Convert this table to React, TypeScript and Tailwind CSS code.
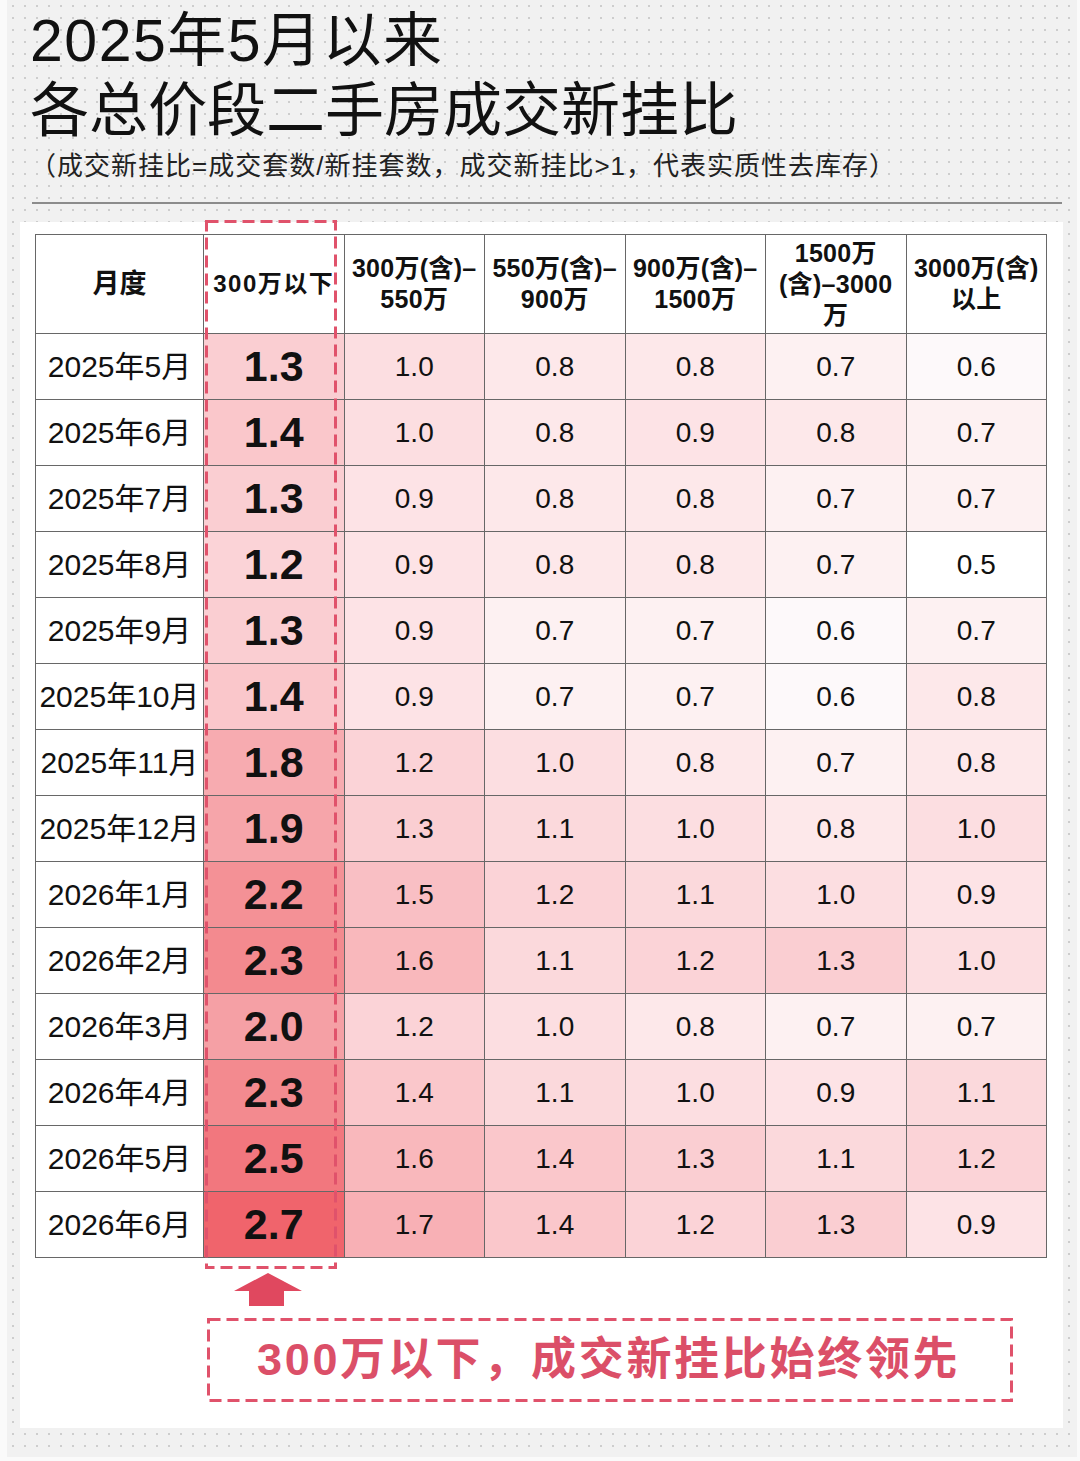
import React from "react";

type Row = [string, number, number, number, number, number, number];

const rows: Row[] = [
  ["2025年5月", 1.3, 1.0, 0.8, 0.8, 0.7, 0.6],
  ["2025年6月", 1.4, 1.0, 0.8, 0.9, 0.8, 0.7],
  ["2025年7月", 1.3, 0.9, 0.8, 0.8, 0.7, 0.7],
  ["2025年8月", 1.2, 0.9, 0.8, 0.8, 0.7, 0.5],
  ["2025年9月", 1.3, 0.9, 0.7, 0.7, 0.6, 0.7],
  ["2025年10月", 1.4, 0.9, 0.7, 0.7, 0.6, 0.8],
  ["2025年11月", 1.8, 1.2, 1.0, 0.8, 0.7, 0.8],
  ["2025年12月", 1.9, 1.3, 1.1, 1.0, 0.8, 1.0],
  ["2026年1月", 2.2, 1.5, 1.2, 1.1, 1.0, 0.9],
  ["2026年2月", 2.3, 1.6, 1.1, 1.2, 1.3, 1.0],
  ["2026年3月", 2.0, 1.2, 1.0, 0.8, 0.7, 0.7],
  ["2026年4月", 2.3, 1.4, 1.1, 1.0, 0.9, 1.1],
  ["2026年5月", 2.5, 1.6, 1.4, 1.3, 1.1, 1.2],
  ["2026年6月", 2.7, 1.7, 1.4, 1.2, 1.3, 0.9],
];

// heatmap stops: value -> rgb
const stops: [number, [number, number, number]][] = [
  [0.5, [255, 255, 255]],
  [0.6, [253, 249, 250]],
  [0.8, [253, 232, 234]],
  [1.0, [252, 222, 225]],
  [1.3, [250, 206, 210]],
  [1.7, [248, 176, 181]],
  [2.0, [245, 160, 165]],
  [2.3, [243, 138, 143]],
  [2.7, [240, 100, 108]],
];

function heat(v: number) {
  if (v <= stops[0][0]) return "rgb(255,255,255)";
  for (let i = 1; i < stops.length; i++) {
    const [v1, c1] = stops[i];
    const [v0, c0] = stops[i - 1];
    if (v <= v1) {
      const t = (v - v0) / (v1 - v0);
      const c = c0.map((x, k) => Math.round(x + (c1[k] - x) * t));
      return `rgb(${c[0]},${c[1]},${c[2]})`;
    }
  }
  const last = stops[stops.length - 1][1];
  return `rgb(${last[0]},${last[1]},${last[2]})`;
}

const headers: React.ReactNode[] = [
  <>300万(含)–<br />550万</>,
  <>550万(含)–<br />900万</>,
  <>900万(含)–<br />1500万</>,
  <>1500万<br />(含)–3000<br />万</>,
  <>3000万(含)<br />以上</>,
];

const cellBorder = "border border-[#676767]";

// dashed outline drawn as svg so dash length matches
function DashedFrame({ w, h }: { w: number; h: number }) {
  return (
    <svg
      className="absolute left-0 top-0 pointer-events-none"
      width={w}
      height={h}
      viewBox={`0 0 ${w} ${h}`}
    >
      <rect
        x="1.5"
        y="1.5"
        width={w - 3}
        height={h - 3}
        fill="none"
        stroke="#e0526b"
        strokeWidth="3"
        strokeDasharray="12 6"
      />
    </svg>
  );
}

export default function App() {
  return (
    <div className="w-[1080px] h-[1461px] bg-[#fafafa] pl-[7px] pr-[3px] pb-[4px] font-['Liberation_Sans','Noto_Sans_CJK_SC',sans-serif] text-[#111]">
      <div className="h-full bg-[#f1f1f1] bg-[radial-gradient(circle,#cdcdcd_0.9px,transparent_1.4px)] bg-[length:12px_12px] pt-[6px] pb-[29px]">
        {/* title */}
        <div className="pl-[23px]">
          <h1 className="text-[59px] leading-[70px] font-normal">
            <span className="tracking-[1.5px]">2025年5月以来</span>
            <br />
            各总价段二手房成交新挂比
          </h1>
          <p className="mt-[5px] text-[26px] leading-[30px] text-[#222] tracking-[1px]">
            （成交新挂比=成交套数/新挂套数，成交新挂比&gt;1，代表实质性去库存）
          </p>
        </div>
        <div className="ml-[25px] mt-[21px] w-[1030px] h-[2px] bg-[#8c8c8c]" />

        {/* card */}
        <div className="ml-[13px] mt-[18px] w-[1043px] h-[1206px] bg-white pl-[15px] pt-[12px]">
          <div className="relative w-[1012px]">
            <table className="table-fixed border-collapse w-[1012px]">
              <colgroup>
                <col className="w-[168px]" />
                <col />
                <col />
                <col />
                <col />
                <col />
                <col />
              </colgroup>
              <thead>
                <tr className="h-[99px] bg-white">
                  <th className={`${cellBorder} text-[27px] font-bold`}>月度</th>
                  <th className={`${cellBorder} text-[24px] font-bold whitespace-nowrap tracking-[1.5px] px-0`}>
                    300万以下
                  </th>
                  {headers.map((h, i) => (
                    <th
                      key={i}
                      className={`${cellBorder} text-[25px] leading-[31px] font-bold whitespace-nowrap tracking-[0.3px] px-0`}
                    >
                      {h}
                    </th>
                  ))}
                </tr>
              </thead>
              <tbody>
                {rows.map((r) => (
                  <tr key={r[0]} className="h-[66px]">
                    <td className={`${cellBorder} bg-white text-center text-[30px] whitespace-nowrap px-0`}>
                      {r[0]}
                    </td>
                    {r.slice(1).map((v, i) => (
                      <td
                        key={i}
                        className={`${cellBorder} text-center ${
                          i === 0 ? "text-[43px] font-bold" : "text-[28px]"
                        }`}
                        style={{ backgroundColor: heat(v as number) }}
                      >
                        {(v as number).toFixed(1)}
                      </td>
                    ))}
                  </tr>
                ))}
              </tbody>
            </table>
            {/* dashed highlight on 300万以下 column */}
            <div className="absolute left-[170px] top-[-14px] w-[132px] h-[1049px] pointer-events-none">
              <DashedFrame w={132} h={1049} />
            </div>
          </div>

          {/* arrow */}
          <svg className="ml-[198px] mt-[15px] block" width="70" height="33" viewBox="0 0 70 33">
            <polygon points="35,0 69,18 51,18 51,33 16,33 16,18 1,18" fill="#e0485f" />
          </svg>

          {/* callout */}
          <div className="relative ml-[172px] mt-[12px] w-[806px] h-[84px] flex items-center pl-[50px]">
            <DashedFrame w={806} h={84} />
            <span className="text-[45px] font-bold text-[#db4f68] tracking-[2.7px]">
              300万以下，成交新挂比始终领先
            </span>
          </div>
        </div>
      </div>
    </div>
  );
}
